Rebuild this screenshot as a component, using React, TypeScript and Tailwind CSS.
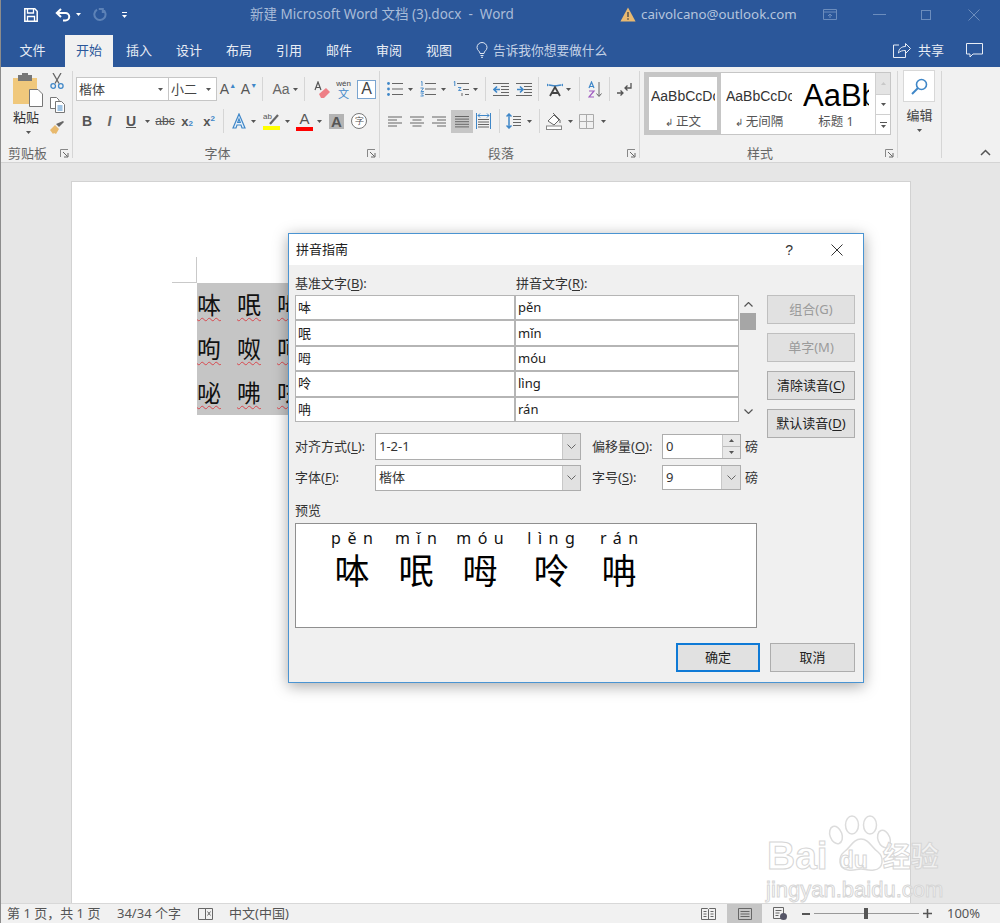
import type { ReactNode } from 'react'

const gray = '#555'
const blue = '#3f87c8'

function Caret({ className = '', color = gray }: { className?: string; color?: string }) {
  return (
    <svg width="5" height="3" viewBox="0 0 5 3" className={`shrink-0 ${className}`}>
      <path d="M0 0h5L2.5 3z" fill={color} />
    </svg>
  )
}

function Sep({ className = '' }: { className?: string }) {
  return <div className={`w-px h-[24px] bg-[#d6d6d6] shrink-0 ${className}`} />
}

function Launcher() {
  return (
    <svg width="9" height="9" viewBox="0 0 9 9" className="absolute right-[3px] bottom-[0px]">
      <path d="M.5 8V.5H8" fill="none" stroke="#888" />
      <path d="M3 3l4.5 4.5M8 4v4H4" fill="none" stroke="#666" />
    </svg>
  )
}

function Group({ className, label, launcher = true, children }: { className: string; label?: string; launcher?: boolean; children: ReactNode }) {
  return (
    <div className={`relative flex flex-col shrink-0 border-r border-[#d6d6d6] ${className}`}>
      {children}
      {label && <div className="mt-auto mb-[-2px] h-[14px] pr-[17px] flex items-center justify-center text-[13px] text-[#666] leading-none">{label}</div>}
      {launcher && <Launcher />}
    </div>
  )
}

function Lines({ x = 0, w = 12, n = 3, gapY = 5, y = 2, c = '#666' }: { x?: number; w?: number; n?: number; gapY?: number; y?: number; c?: string }) {
  return (
    <>
      {Array.from({ length: n }).map((_, i) => (
        <rect key={i} x={x} y={y + i * gapY} width={w} height="1" fill={c} />
      ))}
    </>
  )
}

function ListIcon({ kind }: { kind: 'bullet' | 'number' | 'multi' }) {
  return (
    <svg width="16" height="16" viewBox="0 0 16 16" className="shrink-0">
      {kind === 'bullet' && (
        <>
          <circle cx="1.5" cy="2.5" r="1.4" fill={blue} />
          <circle cx="1.5" cy="8" r="1.4" fill={blue} />
          <circle cx="1.5" cy="13.5" r="1.4" fill={blue} />
          <Lines x={5} w={11} gapY={5.5} />
        </>
      )}
      {kind === 'number' && (
        <>
          <path d="M1 1l1-.6V5M.5 7h3l-2.5 3.5h3M.5 12h3l-1.5 1.500 1.500 1.500h-3" fill="none" stroke={blue} strokeWidth=".9" />
          <Lines x={5} w={11} gapY={5.5} />
        </>
      )}
      {kind === 'multi' && (
        <>
          <path d="M.8 1l1-.6V5" fill="none" stroke={blue} />
          <path d="M5 6.5h3l-2.5 3h3" fill="none" stroke={blue} strokeWidth=".9" />
          <path d="M9 12v3" stroke="#666" />
          <rect x="4" y="2" width="12" height="1" fill="#666" />
          <rect x="10" y="8" width="6" height="1" fill="#666" />
          <rect x="12" y="13" width="4" height="1" fill="#666" />
        </>
      )}
    </svg>
  )
}

function AlignIcon({ kind }: { kind: 'left' | 'center' | 'right' | 'justify' }) {
  const rows = kind === 'justify' ? [14, 14, 14, 14, 14] : [14, 9, 14, 9]
  return (
    <svg width="14" height="13" viewBox="0 0 14 13" className="shrink-0">
      {rows.map((w, i) => {
        const x = kind === 'right' ? 14 - w : kind === 'center' ? (14 - w) / 2 : 0
        return <rect key={i} x={x} y={kind === 'justify' ? 1 + i * 2.6 : 1.5 + i * 3} width={w} height="1" fill="#666" />
      })}
    </svg>
  )
}

function Indent({ flip }: { flip?: boolean }) {
  return (
    <svg width="16" height="15" viewBox="0 0 16 15" className="shrink-0">
      <Lines x={0} w={16} n={2} gapY={12} y={1} />
      <Lines x={8} w={8} n={3} gapY={3} y={4} />
      {flip ? (
        <path d="M7 7.5H1M4 4.5l3 3-3 3" fill="none" stroke={blue} strokeWidth="1.6" />
      ) : (
        <path d="M1 7.5h6M4 4.5l-3 3 3 3" fill="none" stroke={blue} strokeWidth="1.6" />
      )}
    </svg>
  )
}

function ComboBtn({ className = '' }: { className?: string }) {
  return (
    <div className={`flex items-center justify-center bg-[#e1e1e1] border-l border-[#c8c8c8] h-full shrink-0 ${className}`}>
      <svg width="9" height="5" viewBox="0 0 9 5">
        <path d="M.5.5l4 4 4-4" fill="none" stroke="#666" />
      </svg>
    </div>
  )
}

function U({ children }: { children: ReactNode }) {
  return <span className="underline underline-offset-2">{children}</span>
}

function PinyinRow({ han, py }: { han: string; py: string }) {
  return (
    <>
      <div className="h-[25.4px] bg-white border border-[#b5b5b5] pl-[2px] flex items-center text-[13px] text-[#222] leading-none">{han}</div>
      <div className="h-[25.4px] bg-white border border-[#b5b5b5] pl-[2px] flex items-center text-[13px] text-[#222] leading-none">{py}</div>
    </>
  )
}

function DlgButton({ children, off }: { children: ReactNode; off?: boolean }) {
  return (
    <div className={`h-[29px] flex items-center justify-center border text-[13px] leading-none whitespace-nowrap ${off ? 'bg-[#e1e1e1] border-[#bfbfbf] text-[#9b9b9b]' : 'bg-[#e1e1e1] border-[#adadad] text-[#222]'}`}>
      {children}
    </div>
  )
}

function Cell({ children, className }: { children: ReactNode; className: string }) {
  return <div className={`flex items-center justify-center shrink-0 leading-none ${className}`}>{children}</div>
}

function PreviewCol({ py, han, className }: { py: string; han: string; className: string }) {
  return (
    <div className={`flex flex-col items-center shrink-0 ${className}`}>
      <div className="h-[16px] text-[16px] leading-[16px] tracking-[6.5px] mr-[-6.5px] whitespace-nowrap text-[#111]">{py}</div>
      <div className="mt-[7px] h-[36px] text-[35px] leading-[36px] text-black">{han}</div>
    </div>
  )
}

function TextRow({ chars }: { chars: string[] }) {
  return (
    <div className="h-[44px] flex items-center">
      {chars.map((c) => (
        <div key={c} className="w-[40px] text-[24px] leading-[30px] text-[#111] underline decoration-wavy decoration-[#d8474d] decoration-1 underline-offset-[3px]">
          {c}
        </div>
      ))}
    </div>
  )
}

function StyleItem({ sample, label, className, mark = true }: { sample: ReactNode; label: string; className: string; mark?: boolean }) {
  return (
    <div className={`flex flex-col items-center shrink-0 overflow-hidden ${className}`}>
      <div className="h-[38px] w-full flex items-center justify-start overflow-hidden whitespace-nowrap">{sample}</div>
      <div className="text-[12.5px] leading-[14px] text-[#555] whitespace-nowrap">
        {mark && <span className="text-[10px] mr-[3px]">↲</span>}
        {label}
      </div>
    </div>
  )
}

export default function App() {
  return (
    <div className="relative w-[1000px] h-[923px] flex flex-col overflow-hidden bg-[#e6e6e6] font-['Noto_Sans','Noto_Sans_CJK_SC',sans-serif]">
      {/* title bar */}
      <div className="h-[29px] bg-[#2b579a] flex items-center shrink-0 text-[13.5px]">
        <svg width="14" height="14" viewBox="0 0 14 14" className="ml-[24px] shrink-0">
          <path d="M.8.8h10l2.4 2.4v10H.8z" fill="none" stroke="#fff" strokeWidth="1.5" />
          <path d="M3.5 1v4h6V1M3.5 13V8.5h7V13" fill="none" stroke="#fff" strokeWidth="1.3" />
        </svg>
        <svg width="16" height="14" viewBox="0 0 16 14" className="ml-[17px] shrink-0">
          <path d="M6 1L1.8 5 6 9M2 5h8.5a3.7 3.7 0 0 1 0 7.5H8" fill="none" stroke="#fff" strokeWidth="2" />
        </svg>
        <Caret className="ml-[5px]" color="#fff" />
        <svg width="15" height="15" viewBox="0 0 15 15" className="ml-[11px] shrink-0">
          <path d="M5 2.6a5.6 5.6 0 1 0 5.5-.2M10.8 6V2h-4" fill="none" stroke="#5d82b7" strokeWidth="2" />
        </svg>
        <div className="ml-[15px] flex flex-col items-center gap-[2px] shrink-0">
          <div className="w-[5px] h-px bg-white" />
          <Caret color="#fff" />
        </div>
        <div className="ml-[123px] w-[370px] shrink-0 text-[#a9bcd8] whitespace-nowrap leading-none">新建 Microsoft Word 文档 (3).docx &nbsp;-&nbsp; Word</div>
        <svg width="16" height="15" viewBox="0 0 16 15" className="shrink-0">
          <path d="M8 .5l7.6 14H.4z" fill="#e9b970" />
          <path d="M8 5v5M8 11.2v1.6" stroke="#4a4a4a" strokeWidth="1.4" />
        </svg>
        <div className="ml-[5px] w-[182px] shrink-0 text-[#b5c5dd] text-[13.3px] whitespace-nowrap leading-none">caivolcano@outlook.com</div>
        <svg width="14" height="11" viewBox="0 0 14 11" className="shrink-0">
          <path d="M.5.5h13v10H.5zM.5 3h13M7 9V5M5 7l2-2 2 2" fill="none" stroke="#6c8dbd" />
        </svg>
        <div className="ml-[36px] w-[13px] h-px bg-[#6c8dbd] shrink-0" />
        <div className="ml-[35px] w-[10px] h-[10px] border border-[#6c8dbd] shrink-0" />
        <svg width="12" height="12" viewBox="0 0 12 12" className="ml-[37px] shrink-0">
          <path d="M.5.5l11 11M11.5.5l-11 11" stroke="#6c8dbd" />
        </svg>
      </div>

      {/* tabs */}
      <div className="h-[38px] bg-[#2b579a] flex items-end shrink-0 text-[13px] text-[#e8edf5]">
        <Cell className="w-[65px] h-[32px] pb-[2px]">文件</Cell>
        <Cell className="w-[48px] h-[32px] pb-[2px] bg-[#f1f1f1] text-[#2b579a]">开始</Cell>
        <Cell className="w-[1px] h-[32px]">{null}</Cell>
        {['插入', '设计', '布局', '引用', '邮件', '审阅', '视图'].map((t) => (
          <Cell key={t} className="w-[50px] h-[32px] pb-[2px]">{t}</Cell>
        ))}
        <div className="h-[32px] pb-[2px] flex items-center ml-[12px]">
          <svg width="12" height="16" viewBox="0 0 12 16" className="shrink-0">
            <path d="M4 11.5C4 9 1 8.5 1 5.5a5 5 0 0 1 10 0c0 3-3 3.5-3 6zM4.5 13.5h3M5 15.3h2" fill="none" stroke="#dfe6f1" />
          </svg>
          <span className="ml-[5px] w-[391px] text-[12.7px] text-[#c5d2e6] whitespace-nowrap leading-none">告诉我你想要做什么</span>
          <svg width="18" height="16" viewBox="0 0 18 16" className="ml-[9px] shrink-0">
            <path d="M6 3H.5v12.5h12V11M5.5 11c0-4 3-6.5 7-6.5V1.5l5 5-5 5V8.5c-3 0-5.500.5-7 2.500z" fill="none" stroke="#e8edf5" />
          </svg>
          <span className="ml-[7px] w-[25px] whitespace-nowrap leading-none">共享</span>
          <svg width="17" height="15" viewBox="0 0 17 15" className="ml-[23px] shrink-0">
            <path d="M.5.500h16v10.500H7l-3 3v-3H.5z" fill="none" stroke="#e8edf5" />
          </svg>
        </div>
      </div>

      {/* ribbon */}
      <div className="h-[96px] bg-[#f1f1f1] flex pt-[4px] pb-[4px] shrink-0 border-b border-[#d4d4d4] text-[#444]">
        <Group className="w-[73px]" label="剪贴板">
          <div className="flex">
            <div className="w-[47px] pl-[9px] pt-[2px] flex flex-col items-center shrink-0">
              <svg width="30" height="34" viewBox="0 0 30 34" className="shrink-0">
                <rect x="0" y="5" width="24" height="26" fill="#f0c87c" />
                <rect x="5" y="2" width="14" height="6" fill="#777" />
                <rect x="9" y="0" width="6" height="3" fill="#777" />
                <path d="M16.500 16.500h8.500l4.500 4.500v12.500h-13z" fill="#fff" stroke="#777" />
              </svg>
              <div className="mt-[2px] mr-[4px] text-[13px] leading-[16px] text-[#333] whitespace-nowrap">粘贴</div>
              <Caret className="mt-[6px]" />
            </div>
            <div className="w-[20px] flex flex-col items-center gap-[8px] pt-[2px] shrink-0">
              <svg width="14" height="16" viewBox="0 0 14 16">
                <path d="M3 0l6 10.500M11 0L5 10.500" stroke="#666" strokeWidth="1.3" />
                <circle cx="3.200" cy="13" r="2.300" fill="none" stroke={blue} strokeWidth="1.300" />
                <circle cx="10.800" cy="13" r="2.300" fill="none" stroke={blue} strokeWidth="1.300" />
              </svg>
              <svg width="15" height="16" viewBox="0 0 15 16">
                <path d="M.5.5h6l2.500 2.500v8.500H.5z" fill="#fff" stroke="#777" />
                <path d="M5.500 4.500h6l3 3v8h-9z" fill="#fff" stroke="#777" />
                <path d="M7.500 9h5M7.500 11h5M7.500 13h5" stroke={blue} />
              </svg>
              <svg width="15" height="14" viewBox="0 0 15 14">
                <path d="M0 9l5-5 4 4-3 5-2-1-1 1z" fill="#e8b96d" />
                <path d="M6 3l3 3 5-5-1-1z" fill="#666" />
              </svg>
            </div>
          </div>
        </Group>

        <Group className="w-[307px]" label="字体">
          <div className="mt-[6px] h-[24px] flex items-center">
            <div className="ml-[3px] w-[93px] h-[24px] bg-white border border-[#c6c6c6] flex items-center justify-between pl-[2px] pr-[5px] text-[13px] leading-none shrink-0">
              楷体
              <Caret />
            </div>
            <div className="ml-[-1px] w-[49px] h-[24px] bg-white border border-[#c6c6c6] flex items-center justify-between pl-[2px] pr-[5px] text-[13px] leading-none shrink-0">
              小二
              <Caret />
            </div>
            <Cell className="ml-[3px] w-[16px] text-[14px] font-['Liberation_Sans',sans-serif] text-[#555]">
              A<span className="text-[7px] text-[#3f87c8] self-start">▲</span>
            </Cell>
            <Cell className="ml-[5px] w-[16px] text-[14px] font-['Liberation_Sans',sans-serif] text-[#555]">
              A<span className="text-[7px] text-[#3f87c8] self-start">▼</span>
            </Cell>
            <Sep className="ml-[5px]" />
            <Cell className="ml-[8px] w-[20px] text-[14px] font-['Liberation_Sans',sans-serif] text-[#666]">Aa</Cell>
            <Caret className="ml-[2px]" />
            <Sep className="ml-[6px]" />
            <svg width="16" height="17" viewBox="0 0 16 17" className="ml-[9px] shrink-0">
              <path d="M1 9L4 1l3 8M2 6.500h4" fill="none" stroke="#555" strokeWidth="1.200" />
              <path d="M5 13l7-6 4 4-6 6H7z" fill="#ee7f86" />
            </svg>
            <div className="ml-[5px] w-[17px] flex flex-col items-center shrink-0">
              <span className="h-[8px] text-[8px] leading-[8px] text-[#444] font-['Liberation_Sans',sans-serif]">wén</span>
              <span className="h-[11px] text-[11px] leading-[11px] text-[#3f87c8]">文</span>
            </div>
            <Cell className="ml-[5px] w-[19px] h-[19px] bg-white border border-[#7ba5d0] text-[16px] text-[#444] font-['Liberation_Sans',sans-serif]">A</Cell>
          </div>
          <div className="mt-[8px] h-[24px] flex items-center text-[#555] font-['Liberation_Sans',sans-serif]">
            <Cell className="ml-[9px] w-[10px] text-[14px] font-bold">B</Cell>
            <Cell className="ml-[13px] w-[9px] text-[14px] italic font-bold text-[#666]">I</Cell>
            <Cell className="ml-[12px] w-[10px] text-[14px] font-bold underline">U</Cell>
            <Caret className="ml-[9px]" />
            <Cell className="ml-[6px] w-[18px] text-[12px] line-through">abc</Cell>
            <Cell className="ml-[6px] w-[14px] text-[13px] font-bold">
              x<span className="text-[8px] text-[#3f87c8] self-end">2</span>
            </Cell>
            <Cell className="ml-[8px] w-[14px] text-[13px] font-bold">
              x<span className="text-[8px] text-[#3f87c8] self-start">2</span>
            </Cell>
            <Sep className="ml-[7px]" />
            <svg width="14" height="16" viewBox="0 0 14 16" className="ml-[8px] shrink-0">
              <path d="M1 15L7 1l6 14h-3l-1-3H5l-1 3zM5.700 9.500h2.600L7 6z" fill="#e8f1fa" stroke={blue} strokeWidth="1.200" />
            </svg>
            <Caret className="ml-[5px]" />
            <div className="ml-[7px] w-[17px] h-[18px] flex flex-col shrink-0">
              <svg width="17" height="14" viewBox="0 0 17 14">
                <text x="0" y="7" fontSize="8" fill="#555">ab</text>
                <path d="M7 12l8-9" stroke="#666" strokeWidth="2.200" />
              </svg>
              <div className="h-[4px] bg-[#ffff00]" />
            </div>
            <Caret className="ml-[5px]" />
            <div className="ml-[6px] w-[17px] flex flex-col items-center shrink-0">
              <span className="text-[15px] leading-[14px]">A</span>
              <div className="mt-[1px] w-[17px] h-[4px] bg-[#ff0000]" />
            </div>
            <Caret className="ml-[4px]" />
            <Cell className="ml-[7px] w-[15px] h-[15px] bg-[#b4b4b4] text-[15px] font-bold text-[#555]">A</Cell>
            <div className="ml-[7px] w-[16px] h-[16px] rounded-full border border-[#777] bg-white flex items-center justify-center text-[9px] leading-none shrink-0">字</div>
          </div>
        </Group>

        <Group className="w-[260px]" label="段落">
          <div className="mt-[6px] h-[24px] flex items-center">
            <div className="ml-[7px] shrink-0"><ListIcon kind="bullet" /></div>
            <Caret className="ml-[5px]" />
            <div className="ml-[7px] shrink-0"><ListIcon kind="number" /></div>
            <Caret className="ml-[5px]" />
            <div className="ml-[7px] shrink-0"><ListIcon kind="multi" /></div>
            <Caret className="ml-[4px]" />
            <Sep className="ml-[7px]" />
            <div className="ml-[7px] shrink-0"><Indent /></div>
            <div className="ml-[7px] shrink-0"><Indent flip /></div>
            <Sep className="ml-[6px]" />
            <svg width="16" height="16" viewBox="0 0 16 16" className="ml-[8px] shrink-0">
              <path d="M2 4L8 5l6-1" fill="none" stroke={blue} strokeWidth="1.500" />
              <path d="M0 2.500l2 1.500-2 1.500M16 2.500L14 4l2 1.500" fill={blue} />
              <path d="M3 15l5-9 5 9M5 12h6" fill="none" stroke="#444" strokeWidth="1.800" />
            </svg>
            <Caret className="ml-[3px]" />
            <Sep className="ml-[8px]" />
            <svg width="15" height="17" viewBox="0 0 15 17" className="ml-[8px] shrink-0">
              <path d="M1 7l2.500-6L6 7M1.700 5.500h3.600" fill="none" stroke={blue} strokeWidth="1.200" />
              <path d="M1 10h5l-5 6h5" fill="none" stroke="#a05cc0" strokeWidth="1.200" />
              <path d="M11 1v14M8.500 12.500l2.500 3 2.500-3" fill="none" stroke="#666" />
            </svg>
            <Sep className="ml-[6px]" />
            <svg width="15" height="13" viewBox="0 0 15 13" className="ml-[7px] shrink-0">
              <path d="M14 0v5H8M10.500 2.500L8 5l2.500 2.500" fill="none" stroke="#555" strokeWidth="1.300" />
              <path d="M0 10h6M3.500 7.500L6 10l-2.500 2.500" fill="none" stroke="#555" strokeWidth="1.300" />
            </svg>
          </div>
          <div className="mt-[8px] h-[24px] flex items-center">
            <div className="ml-[8px] shrink-0"><AlignIcon kind="left" /></div>
            <div className="ml-[8px] shrink-0"><AlignIcon kind="center" /></div>
            <div className="ml-[8px] shrink-0"><AlignIcon kind="right" /></div>
            <Cell className="ml-[5px] w-[22px] h-[23px] bg-[#c6c6c6]"><AlignIcon kind="justify" /></Cell>
            <svg width="15" height="16" viewBox="0 0 15 16" className="ml-[3px] shrink-0">
              <Lines x={2} w={11} n={4} gapY={2.500} y={6} />
              <path d="M.5 0v16M14.500 0v16M2 2.500h11M4 .5l-2 2 2 2M11 .5l2 2-2 2" fill="none" stroke={blue} />
            </svg>
            <Sep className="ml-[8px]" />
            <svg width="15" height="16" viewBox="0 0 15 16" className="ml-[6px] shrink-0">
              <path d="M3 1v14M.5 3.500L3 1l2.500 2.500M.5 12.500L3 15l2.500-2.500" fill="none" stroke={blue} strokeWidth="1.500" />
              <Lines x={7} w={8} n={4} gapY={3} y={3} />
            </svg>
            <Caret className="ml-[6px]" />
            <Sep className="ml-[7px]" />
            <svg width="17" height="18" viewBox="0 0 17 18" className="ml-[6px] shrink-0">
              <path d="M2 9l6-6 5 5-5 5z" fill="#fff" stroke="#666" />
              <path d="M7 1l7 7v3" fill="none" stroke="#666" />
              <rect x=".5" y="14" width="15" height="3.500" fill="#fff" stroke="#888" />
            </svg>
            <Caret className="ml-[5px]" />
            <svg width="15" height="15" viewBox="0 0 15 15" className="ml-[6px] shrink-0">
              <path d="M.5.500h14v14H.5zM7.500.500v14M.5 7.500h14" fill="none" stroke="#aaa" />
            </svg>
            <Caret className="ml-[7px]" />
          </div>
        </Group>

        <Group className="w-[258px]" label="样式">
          <div className="ml-[4px] mt-[1px] w-[247px] h-[63px] flex bg-white border border-[#c6c6c6]">
            <StyleItem
              className="w-[76px] border-[4px] border-[#c6c6c6] h-full px-[2px]"
              sample={<span className="text-[14px] text-[#333] font-['Liberation_Sans',sans-serif]">AaBbCcDc</span>}
              label="正文"
            />
            <StyleItem
              className="w-[76px] h-full px-[5px] pt-[4px]"
              sample={<span className="text-[14px] text-[#333] font-['Liberation_Sans',sans-serif]">AaBbCcDc</span>}
              label="无间隔"
            />
            <StyleItem
              className="w-[78px] h-full px-[6px] pt-[4px]"
              sample={<span className="text-[31px] text-black font-['Liberation_Sans',sans-serif]">AaBbC</span>}
              label="标题 1"
              mark={false}
            />
            <div className="w-[15px] flex flex-col shrink-0 border-l border-[#d0d0d0]">
              <Cell className="h-[22px] bg-[#e4e4e4] border-b border-[#d0d0d0]"><Caret color="#c8c8c8" className="rotate-180" /></Cell>
              <Cell className="h-[20px] border-b border-[#d0d0d0]"><Caret /></Cell>
              <Cell className="flex-1 flex-col gap-[2px]">
                <div className="w-[7px] h-px bg-[#555]" />
                <Caret />
              </Cell>
            </div>
          </div>
        </Group>

        <Group className="w-[44px]" label="" launcher={false}>
          <div className="mt-[-1px] ml-[5px] w-[32px] h-[32px] bg-white border border-[#d8d8d8] flex items-center justify-center">
            <svg width="17" height="17" viewBox="0 0 17 17">
              <circle cx="10.500" cy="6.500" r="5" fill="none" stroke={blue} strokeWidth="1.600" />
              <path d="M7 10l-6 6" stroke={blue} strokeWidth="2" />
            </svg>
          </div>
          <div className="mt-[5px] text-center text-[13px] leading-[16px] text-[#444] whitespace-nowrap">编辑</div>
          <Caret className="mt-[6px] self-center" />
        </Group>
        <div className="flex-1 relative">
          <svg width="11" height="7" viewBox="0 0 11 7" className="absolute right-[9px] bottom-[2px]">
            <path d="M1 6l4.500-4.500L10 6" fill="none" stroke="#555" strokeWidth="1.500" />
          </svg>
        </div>
      </div>

      {/* document */}
      <div className="flex-1 pt-[18px] pl-[71px] pr-[89px] overflow-hidden min-h-0">
        <div className="relative h-[800px] bg-white border border-[#d2d2d2] pt-[101px] pl-[125px]">
          <div className="absolute left-[124px] top-[75px] w-px h-[26px] bg-[#c9c9c9]" />
          <div className="absolute left-[100px] top-[100px] w-[24px] h-px bg-[#c9c9c9]" />
          <div className="w-[180px] bg-[#c5c5c5] overflow-hidden">
            <TextRow chars={['呠', '呡', '呣']} />
            <TextRow chars={['呴', '呶', '呵']} />
            <TextRow chars={['咇', '咈', '呟']} />
          </div>
        </div>
      </div>

      {/* status bar */}
      <div className="h-[20px] bg-[#f1f1f1] border-t border-[#d8d8d8] flex items-center shrink-0 text-[13px] text-[#555] leading-none">
        <span className="ml-[7px] w-[110px] whitespace-nowrap">第 1 页，共 1 页</span>
        <span className="w-[81px] whitespace-nowrap">34/34 个字</span>
        <svg width="15" height="12" viewBox="0 0 15 12" className="shrink-0">
          <path d="M.5.500h7v11h-7zM7.500.500h7v11h-7zM9.500 3.500l3 4M12.500 3.500l-3 4" fill="none" stroke="#666" />
        </svg>
        <span className="ml-[16px] w-[472px] whitespace-nowrap">中文(中国)</span>
        <svg width="15" height="12" viewBox="0 0 15 12" className="shrink-0">
          <path d="M.5.500h6l1 1 1-1h6v11h-14zM7.500 1.500v10M2.500 3.500h3M2.500 6h3M2.500 8.500h3M9.500 3.500h3M9.500 6h3M9.500 8.500h3" fill="none" stroke="#666" />
        </svg>
        <Cell className="ml-[11px] w-[35px] h-full bg-[#c6c6c6]">
          <svg width="14" height="12" viewBox="0 0 14 12">
            <path d="M.5.500h13v11H.5zM2.500 3.500h9M2.500 6h9M2.500 8.500h9" fill="none" stroke="#666" />
          </svg>
        </Cell>
        <svg width="14" height="13" viewBox="0 0 14 13" className="ml-[11px] shrink-0">
          <path d="M.5.500h10v11H.5zM2.500 3.500h6M2.500 6h4M2.500 8.500h3" fill="none" stroke="#666" />
          <circle cx="10.500" cy="9.500" r="3.500" fill="#556" />
        </svg>
        <div className="ml-[15px] w-[8px] h-[2px] bg-[#555] shrink-0" />
        <div className="relative ml-[4px] w-[105px] h-px bg-[#999] shrink-0">
          <div className="absolute left-[50px] top-[-5px] w-[4px] h-[11px] bg-[#555]" />
        </div>
        <svg width="9" height="9" viewBox="0 0 9 9" className="ml-[4px] shrink-0">
          <path d="M4.500 0v9M0 4.500h9" stroke="#555" strokeWidth="1.600" />
        </svg>
        <span className="ml-[15px] whitespace-nowrap">100%</span>
      </div>

      {/* pinyin guide dialog */}
      <div className="absolute left-[288px] top-[233px] w-[576px] h-[450px] flex flex-col bg-[#f0f0f0] border border-[#4a94d2] shadow-[0_3px_14px_rgba(0,0,0,0.35)] text-[13px] text-[#333]">
        <div className="h-[31px] bg-white flex items-center shrink-0">
          <span className="ml-[7px] leading-none text-[#222]">拼音指南</span>
          <span className="ml-auto text-[14px] leading-none text-[#333] font-['Liberation_Sans',sans-serif]">?</span>
          <svg width="12" height="12" viewBox="0 0 12 12" className="ml-[38px] mr-[20px] shrink-0">
            <path d="M.5.5l11 11M11.500.5l-11 11" stroke="#333" />
          </svg>
        </div>

        <div className="flex pl-[6px]">
          <div className="w-[462px] shrink-0">
            <div className="h-[30px] pt-[10px] flex leading-[16px]">
              <span className="w-[221px] shrink-0">基准文字(<U>B</U>):</span>
              <span>拼音文字(<U>R</U>):</span>
            </div>
            <div className="flex">
              <div className="w-[444px] grid grid-cols-[220px_224px] shrink-0">
                <PinyinRow han="呠" py="pěn" />
                <PinyinRow han="呡" py="mǐn" />
                <PinyinRow han="呣" py="móu" />
                <PinyinRow han="呤" py="lìng" />
                <PinyinRow han="呥" py="rán" />
              </div>
              <div className="w-[18px] flex flex-col items-center shrink-0">
                <svg width="9" height="5" viewBox="0 0 9 5" className="mt-[7px]">
                  <path d="M.5 4.500l4-4 4 4" fill="none" stroke="#555" strokeWidth="1.200" />
                </svg>
                <div className="mt-[6px] w-[16px] h-[17px] bg-[#a6a6a6]" />
                <svg width="9" height="5" viewBox="0 0 9 5" className="mt-[79px]">
                  <path d="M.5.500l4 4 4-4" fill="none" stroke="#555" strokeWidth="1.200" />
                </svg>
              </div>
            </div>
            <div className="mt-[11px] h-[27px] flex items-center">
              <span className="w-[80px] shrink-0 leading-none whitespace-nowrap">对齐方式(<U>L</U>):</span>
              <div className="w-[206px] h-[27px] bg-white border border-[#adadad] flex items-center justify-between pl-[3px] shrink-0 leading-none">
                1-2-1
                <ComboBtn className="w-[18px]" />
              </div>
              <span className="ml-[11px] w-[70px] shrink-0 leading-none whitespace-nowrap">偏移量(<U>O</U>):</span>
              <div className="w-[79px] h-[25px] bg-white border border-[#adadad] flex items-center justify-between pl-[3px] shrink-0 leading-none">
                0
                <div className="w-[18px] h-full flex flex-col border-l border-[#c8c8c8] shrink-0">
                  <Cell className="flex-1 bg-[#e8e8e8] border-b border-[#bbb]"><Caret className="rotate-180" /></Cell>
                  <Cell className="flex-1 bg-[#e8e8e8]"><Caret /></Cell>
                </div>
              </div>
              <span className="ml-[4px] leading-none">磅</span>
            </div>
            <div className="mt-[5px] h-[26px] flex items-center">
              <span className="w-[80px] shrink-0 leading-none whitespace-nowrap">字体(<U>F</U>):</span>
              <div className="w-[206px] h-[26px] bg-white border border-[#adadad] flex items-center justify-between pl-[3px] shrink-0 leading-none">
                楷体
                <ComboBtn className="w-[18px]" />
              </div>
              <span className="ml-[11px] w-[70px] shrink-0 leading-none whitespace-nowrap">字号(<U>S</U>):</span>
              <div className="w-[79px] h-[25px] bg-white border border-[#adadad] flex items-center justify-between pl-[3px] shrink-0 leading-none">
                9
                <ComboBtn className="w-[19px]" />
              </div>
              <span className="ml-[4px] leading-none">磅</span>
            </div>
            <div className="mt-[9px] h-[22px] flex items-center leading-none">预览</div>
            <div className="mt-[1px] h-[105px] bg-white border border-[#8f8f8f] pl-[34px] pt-[6px] flex">
              <PreviewCol py="pěn" han="呠" className="w-[44px]" />
              <PreviewCol py="mǐn" han="呡" className="ml-[20px] w-[44px]" />
              <PreviewCol py="móu" han="呣" className="ml-[20px] w-[44px]" />
              <PreviewCol py="lìng" han="呤" className="ml-[23px] w-[52px]" />
              <PreviewCol py="rán" han="呥" className="ml-[21px] w-[42px]" />
            </div>
          </div>
          <div className="ml-[10px] w-[88px] pt-[30px] flex flex-col gap-[9px] shrink-0">
            <DlgButton off>组合(G)</DlgButton>
            <DlgButton off>单字(M)</DlgButton>
            <DlgButton>清除读音(<U>C</U>)</DlgButton>
            <DlgButton>默认读音(<U>D</U>)</DlgButton>
          </div>
        </div>

        <div className="mt-[15px] pr-[8px] flex justify-end gap-[10px]">
          <div className="w-[84px] h-[29px] flex items-center justify-center bg-[#e1e1e1] border-2 border-[#0f7ad6] text-[#222] leading-none">确定</div>
          <div className="w-[85px] h-[29px] flex items-center justify-center bg-[#e1e1e1] border border-[#adadad] text-[#222] leading-none">取消</div>
        </div>
      </div>

      {/* watermark */}
      <div className="absolute left-[766px] top-[815px] w-[182px] h-[88px] pointer-events-none">
        <svg width="66" height="60" viewBox="0 0 66 60" className="absolute left-[62px] top-[0px]">
          <g fill="rgba(255,255,255,0.6)" stroke="#dcdcdc" strokeWidth="1.500">
            <ellipse cx="8" cy="20" rx="6" ry="9" transform="rotate(-20 8 20)" />
            <ellipse cx="24" cy="10" rx="6.500" ry="9" />
            <ellipse cx="42" cy="10" rx="6.500" ry="9" />
            <ellipse cx="56" cy="24" rx="6" ry="9" transform="rotate(-20 56 24)" />
            <path d="M33 24c-8 0-10 8-17 13-6 5-6 17 4 18 6 1 9-1 13-1s7 2 13 1c10-1 10-13 4-18-7-5-9-13-17-13z" />
          </g>
        </svg>
        <div className="relative flex items-end h-[60px]">
          <span className="ml-[1px] text-[39px] leading-[39px] font-bold text-[rgba(255,255,255,0.5)] [-webkit-text-stroke:1px_#d6d6d6] font-['Liberation_Sans',sans-serif]">Bai</span>
          <span className="ml-[12px] mb-[2px] w-[34px] text-[23px] leading-[26px] font-bold text-[rgba(255,255,255,0.5)] [-webkit-text-stroke:1px_#d6d6d6] font-['Liberation_Sans',sans-serif]">du</span>
          <span className="ml-[9px] mb-[2px] text-[28px] leading-[34px] font-bold text-[rgba(255,255,255,0.5)] [-webkit-text-stroke:1px_#d6d6d6] whitespace-nowrap">经验</span>
        </div>
        <div className="mt-[4px] text-[22px] leading-[22px] text-[rgba(255,255,255,0.5)] [-webkit-text-stroke:1px_#d6d6d6] whitespace-nowrap font-['Liberation_Sans',sans-serif]">jingyan.baidu.com</div>
      </div>

      <div className="absolute left-0 inset-y-0 w-px bg-[#8c8c8c]" />
    </div>
  )
}
